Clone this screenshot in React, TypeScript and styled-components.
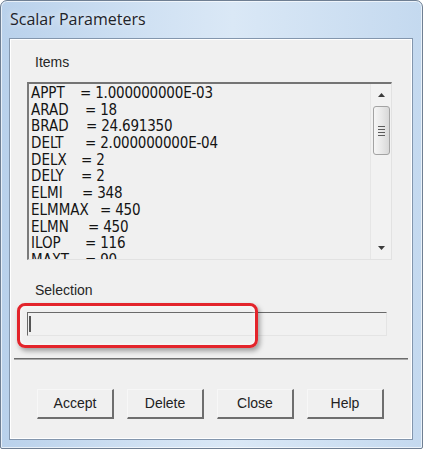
import styled, { createGlobalStyle } from 'styled-components'

const GlobalStyle = createGlobalStyle`
  html, body {
    margin: 0;
    padding: 0;
    background: #ffffff;
  }
`

const Window = styled.div`
  width: 423px;
  height: 449px;
  box-sizing: border-box;
  display: flex;
  flex-direction: column;
  border: 1px solid #6f7f93;
  border-radius: 7px 7px 2px 2px;
  background: linear-gradient(90deg, #b9d1eb 0%, #d0e1f3 35%, #dae8f6 55%, #c4d9ef 100%);
  box-shadow: inset 0 0 0 1px rgba(255, 255, 255, 0.65);
  overflow: hidden;
`

const TitleBar = styled.div`
  height: 37px;
  flex: none;
  display: flex;
  align-items: center;
  padding-left: 9px;
  padding-bottom: 2px;
  box-sizing: border-box;
  font-family: 'Open Sans', 'Noto Sans', sans-serif;
  font-size: 16px;
  color: #1e2329;
  text-shadow: 0 0 6px rgba(255, 255, 255, 0.9);
`

const Client = styled.div`
  flex: 1;
  margin: 0 9px 8px 8px;
  border: 1px solid #8396ad;
  box-shadow: inset 0 0 0 1px #ffffff;
  background: #f0f0f0;
  display: flex;
  flex-direction: column;
  padding: 15px 20px 20px 17px;
  font-family: 'Liberation Sans', Arial, sans-serif;
  color: #1c1c1c;
`

const Label = styled.div<{ $gap?: number }>`
  font-size: 14px;
  line-height: 16px;
  height: 16px;
  padding-left: 8px;
  margin-top: ${(p) => p.$gap ?? 0}px;
  color: #262626;
`

const ListBox = styled.div`
  margin-top: 12px;
  height: 178px;
  box-sizing: border-box;
  border-style: solid;
  border-width: 2px 1px 1px 2px;
  border-color: #747474 #e2e2e2 #e2e2e2 #7a7a7a;
  display: flex;
  background: #f0f0f0;
  overflow: hidden;
`

const ListItems = styled.div`
  flex: 1;
  overflow: hidden;
  padding: 1px 0 0 2px;
  font-family: 'Liberation Sans Narrow', 'DejaVu Sans Condensed', 'Liberation Sans', sans-serif;
  font-size: 15px;
  line-height: 16.7px;
  white-space: pre;
  color: #141414;
`

const Row = styled.div`
  display: flex;
  height: 16.7px;
`

const Name = styled.span<{ $w: number }>`
  display: inline-block;
  width: ${(p) => p.$w}px;
  flex: none;
`

const Value = styled.span`
  letter-spacing: -0.2px;
`

const ScrollBar = styled.div`
  width: 20px;
  flex: none;
  display: flex;
  flex-direction: column;
  align-items: center;
  border-left: 1px solid #e6e6e6;
  background: #f2f2f2;
`

const Arrow = styled.div`
  height: 22px;
  display: flex;
  align-items: center;
  justify-content: center;
`

const Thumb = styled.div`
  width: 17px;
  height: 49px;
  box-sizing: border-box;
  border: 1px solid #a3a3a3;
  border-radius: 3px;
  background: linear-gradient(90deg, #f6f6f6 0%, #e9e9e9 50%, #d8d8d8 100%);
  display: flex;
  flex-direction: column;
  align-items: center;
  justify-content: center;
  gap: 2px;
`

const Grip = styled.div`
  width: 7px;
  height: 1px;
  background: #5b5b5b;
`

const Track = styled.div`
  flex: 1;
`

const InputWrap = styled.div`
  position: relative;
  margin-top: 14px;
`

const TextBox = styled.div`
  width: 360px;
  height: 24px;
  box-sizing: border-box;
  border-style: solid;
  border-width: 1px;
  border-color: #6a6a6a #e4e4e4 #e4e4e4 #6a6a6a;
  background: #f1f1f1;
  display: flex;
  align-items: center;
  padding-left: 1px;
`

const Caret = styled.span`
  width: 2px;
  height: 16px;
  background: #555555;
`

const Highlight = styled.div`
  position: absolute;
  left: -10px;
  top: -9px;
  width: 241px;
  height: 45px;
  box-sizing: border-box;
  border: 3px solid #e3242b;
  border-radius: 8px;
  box-shadow: 2px 3px 5px rgba(0, 0, 0, 0.35), inset 0 0 4px rgba(255, 255, 255, 0.8);
  pointer-events: none;
`

const Separator = styled.div`
  margin: 22px -16px 0 -13px;
  height: 2px;
  box-sizing: border-box;
  border-top: 1px solid #6c6c6c;
  border-bottom: 1px solid #a9a9a9;
`

const ButtonRow = styled.div`
  margin-top: 29px;
  padding-left: 10px;
  display: flex;
  gap: 13px;
`

const Button = styled.button`
  width: 77px;
  height: 30px;
  box-sizing: border-box;
  padding: 0 0 2px;
  background: #f0f0f0;
  border-style: solid;
  border-width: 1px 2px 2px 1px;
  border-color: #f7f7f7 #6e6e6e #6e6e6e #f7f7f7;
  font-family: 'Liberation Sans', Arial, sans-serif;
  font-size: 14px;
  color: #222222;
  cursor: pointer;
`

// name, x offset of the "=" sign from the start of the row
const items: [string, number, string][] = [
  ['APPT', 49, '1.000000000E-03'],
  ['ARAD', 54, '18'],
  ['BRAD', 55, '24.691350'],
  ['DELT', 54, '2.000000000E-04'],
  ['DELX', 50, '2'],
  ['DELY', 50, '2'],
  ['ELMI', 51, '348'],
  ['ELMMAX', 69, '450'],
  ['ELMN', 57, '450'],
  ['ILOP', 54, '116'],
  ['MAXT', 54, '90'],
]

const buttons = ['Accept', 'Delete', 'Close', 'Help']

const App = () => {
  return (
    <>
      <GlobalStyle />
      <Window>
        <TitleBar>Scalar Parameters</TitleBar>
        <Client>
          <Label>Items</Label>
          <ListBox>
            <ListItems>
              {items.map(([name, eq, value]) => (
                <Row key={name}>
                  <Name $w={eq}>{name}</Name>
                  <Value>= {value}</Value>
                </Row>
              ))}
            </ListItems>
            <ScrollBar>
              <Arrow>
                <svg width="7" height="4" viewBox="0 0 7 4">
                  <path d="M0 4 L3.5 0 L7 4 Z" fill="#3c3c3c" />
                </svg>
              </Arrow>
              <Thumb>
                <Grip />
                <Grip />
                <Grip />
                <Grip />
              </Thumb>
              <Track />
              <Arrow>
                <svg width="7" height="4" viewBox="0 0 7 4">
                  <path d="M0 0 L7 0 L3.5 4 Z" fill="#3c3c3c" />
                </svg>
              </Arrow>
            </ScrollBar>
          </ListBox>
          <Label $gap={22}>Selection</Label>
          <InputWrap>
            <TextBox>
              <Caret />
            </TextBox>
            <Highlight />
          </InputWrap>
          <Separator />
          <ButtonRow>
            {buttons.map((b) => (
              <Button key={b}>{b}</Button>
            ))}
          </ButtonRow>
        </Client>
      </Window>
    </>
  )
}

export default App
